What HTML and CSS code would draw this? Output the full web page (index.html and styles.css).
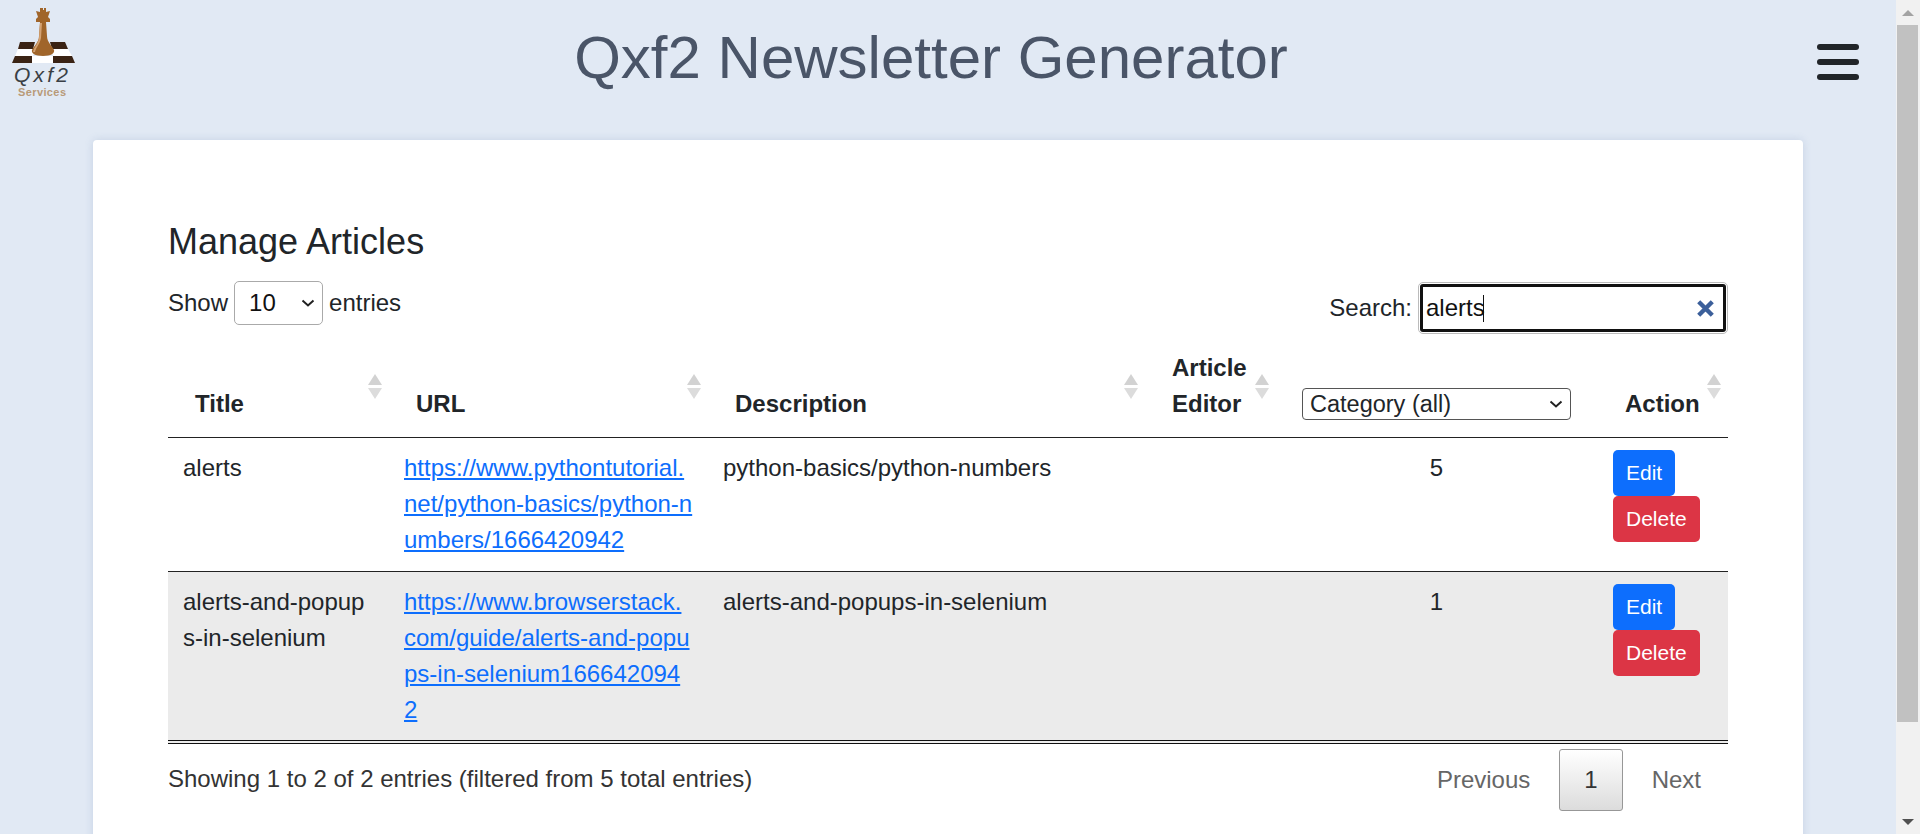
FILE: index.html
```html
<!DOCTYPE html>
<html lang="en">
<head>
    <meta charset="UTF-8">
    <title>Qxf2 Newsletter Generator</title>
    <link rel="stylesheet" href="styles.css">
</head>
<body>
    <div class="page">
        <header class="topbar">
            <svg class="logo" viewBox="0 0 64 88" width="64" height="88" aria-label="Qxf2 Services">
                <polygon points="8,34 23,34 21,41 6,41" fill="#3a2314"/>
                <polygon points="38,34 53,34 56,41 40,41" fill="#3a2314"/>
                <polygon points="6,41 22,41 21,48 3,48" fill="#fff"/>
                <polygon points="40,41 56,41 60,48 41,48" fill="#fff"/>
                <polygon points="3,48 20,48 20,55 0,55" fill="#3a2314"/>
                <polygon points="20,48 41,48 41,55 20,55" fill="#fff"/>
                <polygon points="41,48 60,48 63,55 41,55" fill="#3a2314"/>
                <path d="M28 0h3v2h1v-2h2v4l4-1-2 6 2 2v3h-4l1 14c0 6 5 10 7 14 1 3-3 6-11 6s-12-3-11-6c2-4 7-8 7-14l1-14h-4v-3l2-2-2-6 4 1z" fill="#a0652a"/>
                <path d="M28 15h2l-1 15c-1 6-5 9-6 14h-2c1-5 5-8 6-14z" fill="#d4a272"/>
                <text class="logo-name" x="2" y="74" textLength="54">Qxf2</text>
                <text class="logo-sub" x="6" y="88" textLength="48">Services</text>
            </svg>
            <h1 class="page-title">Qxf2 Newsletter Generator</h1>
            <button class="hamburger" aria-label="Menu"><span></span><span></span><span></span></button>
        </header>

        <main class="card">
            <h3 class="card-title">Manage Articles</h3>

            <div class="table-controls">
                <label class="length">
                    Show
                    <select class="length-select"><option>10</option><option>25</option><option>50</option></select>
                    entries
                </label>
                <label class="search">
                    Search:
                    <span class="search-box">
                        <input class="search-input" type="search" value="alerts">
                        <span class="search-caret"></span>
                        <svg class="search-clear" viewBox="0 0 14 14" width="19" height="19"><path d="M2 2l10 10M12 2L2 12" stroke="#3b5f9a" stroke-width="3.2"/></svg>
                    </span>
                </label>
            </div>

            <table class="articles">
                <thead>
                    <tr>
                        <th class="col-title sortable">Title</th>
                        <th class="col-url sortable">URL</th>
                        <th class="col-desc sortable">Description</th>
                        <th class="col-editor sortable">Article Editor</th>
                        <th class="col-category">
                            <select class="category-select"><option>Category (all)</option><option>1</option><option>5</option></select>
                        </th>
                        <th class="col-action sortable">Action</th>
                    </tr>
                </thead>
                <tbody>
                    <tr>
                        <td>alerts</td>
                        <td><a href="#">https://www.pythontutorial.net/python-basics/python-numbers/1666420942</a></td>
                        <td>python-basics/python-numbers</td>
                        <td></td>
                        <td class="cell-category">5</td>
                        <td>
                            <a class="btn btn-edit" href="#">Edit</a>
                            <a class="btn btn-delete" href="#">Delete</a>
                        </td>
                    </tr>
                    <tr class="row-even">
                        <td>alerts-and-popups-in-selenium</td>
                        <td><a href="#">https://www.browserstack.com/guide/alerts-and-popups-in-selenium1666420942</a></td>
                        <td>alerts-and-popups-in-selenium</td>
                        <td></td>
                        <td class="cell-category">1</td>
                        <td>
                            <a class="btn btn-edit" href="#">Edit</a>
                            <a class="btn btn-delete" href="#">Delete</a>
                        </td>
                    </tr>
                </tbody>
            </table>

            <div class="table-footer">
                <div class="info">Showing 1 to 2 of 2 entries (filtered from 5 total entries)</div>
                <div class="pager">
                    <a class="page-link" href="#">Previous</a>
                    <a class="page-link current" href="#">1</a>
                    <a class="page-link" href="#">Next</a>
                </div>
            </div>
        </main>
    </div>

    <div class="scrollbar">
        <div class="scroll-arrow up"></div>
        <div class="scroll-track"><div class="scroll-thumb"></div></div>
        <div class="scroll-arrow down"></div>
    </div>
</body>
</html>
```

FILE: styles.css
```css
* {
    box-sizing: border-box;
}

html, body {
    height: 100%;
}

body {
    margin: 0;
    display: flex;
    overflow: hidden;
    background-color: #e1e9f4;
    color: #212529;
    font-family: "Liberation Sans", Arial, sans-serif;
    font-size: 24px;
    line-height: 36px;
}

.page {
    flex: 1;
    min-width: 0;
    height: 100%;
    overflow: hidden;
}

/* header */
.topbar {
    display: flex;
    align-items: flex-start;
    height: 140px;
    padding-left: 12px;
}

.logo {
    flex: none;
    margin-top: 8px;
    overflow: visible;
}

.logo-name {
    font-family: "Liberation Sans", sans-serif;
    font-style: italic;
    font-size: 21px;
    fill: #3a3f45;
}

.logo-sub {
    font-family: "Liberation Sans", sans-serif;
    font-size: 11px;
    font-weight: bold;
    fill: #b89a78;
}

.page-title {
    flex: 1;
    margin: 22px 31px 0 0;
    font-size: 60px;
    font-weight: 400;
    line-height: 72px;
    text-align: center;
    color: #4a5568;
}

.hamburger {
    flex: none;
    display: flex;
    flex-direction: column;
    gap: 9px;
    width: 42px;
    margin: 44px 37px 0 0;
    padding: 0;
    border: none;
    background: none;
}

.hamburger span {
    height: 6px;
    border-radius: 3px;
    background-color: #212529;
}

/* card */
.card {
    height: 800px;
    margin: 0 93px;
    padding: 82px 75px 75px;
    background-color: #fff;
    border-radius: 4px;
    box-shadow: 0 0 8px rgba(90, 120, 170, 0.2);
}

.card-title {
    margin: 0 0 19px;
    font-size: 36px;
    font-weight: 400;
    line-height: 40px;
}

.table-controls {
    display: flex;
    justify-content: space-between;
    align-items: flex-start;
    height: 54px;
}

.length {
    display: flex;
    align-items: center;
    gap: 6px;
    height: 44px;
}

.length-select,
.category-select {
    -webkit-appearance: none;
    appearance: none;
    background: #fff url("data:image/svg+xml,%3Csvg xmlns='http://www.w3.org/2000/svg' viewBox='0 0 14 8'%3E%3Cpath d='M1.5 1.5L7 6.5l5.5-5' fill='none' stroke='%23222' stroke-width='2'/%3E%3C/svg%3E") no-repeat right 7px center / 14px 8px;
}

.length-select {
    width: 89px;
    height: 44px;
    padding: 0 8px 0 14px;
    border: 1px solid #aaa;
    border-radius: 5px;
    font: inherit;
    color: #111;
}

.search {
    display: flex;
    align-items: center;
    gap: 6px;
    margin-top: 1px;
}

.search-box {
    position: relative;
    display: block;
    width: 310px;
    height: 52px;
}

.search-input {
    width: 100%;
    height: 100%;
    padding: 0 40px 0 7px;
    border: 1px solid #bbb;
    border-radius: 5px;
    outline: 3px solid #111;
    outline-offset: -5px;
    background-color: #fff;
    font: inherit;
    color: #111;
    -webkit-appearance: none;
    appearance: none;
}

.search-input::-webkit-search-cancel-button {
    display: none;
}

.search-caret {
    position: absolute;
    left: 65px;
    top: 13px;
    width: 1px;
    height: 27px;
    background-color: #111;
}

.search-clear {
    position: absolute;
    right: 13px;
    top: 17px;
}

/* table */
.articles {
    width: 100%;
    table-layout: fixed;
    border-collapse: separate;
    border-spacing: 0;
}

.articles th {
    position: relative;
    padding: 15px 27px;
    border-bottom: 1px solid #222;
    text-align: left;
    vertical-align: bottom;
    font-weight: bold;
}

.articles td {
    padding: 12px 15px;
    border-bottom: 1px solid #222;
    vertical-align: top;
    word-break: break-all;
}

.articles tbody tr:first-child td {
    padding-bottom: 13px;
}

.articles tbody tr:last-child td {
    border-bottom: 4px double #111;
}

.row-even td {
    background-color: #ebebeb;
}

.col-title { width: 221px; }
.col-url { width: 319px; }
.col-desc { width: 437px; }
.col-editor { width: 142px; }
.col-category { width: 311px; }
.col-action { width: 130px; }

.articles th.col-category {
    padding-left: 15px;
    padding-right: 27px;
}

.cell-category {
    text-align: center;
    padding-right: 27px !important;
}

/* sort arrows sit over the header cell */
.sortable::before,
.sortable::after {
    content: "";
    position: absolute;
    right: 7px;
    width: 0;
    height: 0;
    border-left: 7px solid transparent;
    border-right: 7px solid transparent;
}

.col-editor.sortable::before,
.col-editor.sortable::after {
    right: 18px;
}

.sortable::before {
    top: 39px;
    border-bottom: 11px solid #d2d2d2;
}

.sortable::after {
    top: 53px;
    border-top: 11px solid #dcdcdc;
}

a {
    color: #0d6efd;
}

.category-select {
    display: block;
    width: 100%;
    height: 32px;
    margin-top: -2px;
    margin-bottom: 2px;
    padding: 0 24px 0 7px;
    border: 1px solid #555;
    border-radius: 4px;
    font: inherit;
    font-weight: 400;
    font-size: 23.5px;
    line-height: 30px;
    color: #212529;
}

.btn {
    display: table;
    padding: 6px 13px;
    border-radius: 5px;
    font-size: 21px;
    line-height: 34px;
    color: #fff;
    text-decoration: none;
}

.btn-edit {
    background-color: #0d6efd;
}

.btn-delete {
    background-color: #dc3545;
}

/* footer */
.table-footer {
    display: flex;
    justify-content: space-between;
    align-items: flex-start;
    padding-top: 5px;
}

.info {
    margin-top: 12px;
    color: #333;
}

.pager {
    display: flex;
}

.page-link {
    padding: 12px 26px;
    border: 1px solid transparent;
    border-radius: 3px;
    color: #666;
    text-decoration: none;
}

.page-link.current {
    padding: 12px 24px;
    margin: 0 2px;
    border-color: #979797;
    color: #333;
    background: linear-gradient(to bottom, #fff 0%, #dcdcdc 100%);
}

/* drawn scrollbar */
.scrollbar {
    flex: none;
    display: flex;
    flex-direction: column;
    width: 24px;
    height: 100%;
    background-color: #f1f1f1;
}

.scroll-arrow {
    flex: none;
    height: 25px;
    display: flex;
    justify-content: center;
    align-items: center;
}

.scroll-arrow::before {
    content: "";
    border-left: 6px solid transparent;
    border-right: 6px solid transparent;
}

.scroll-arrow.up::before {
    border-bottom: 6px solid #a3a3a3;
}

.scroll-arrow.down::before {
    border-top: 6px solid #505050;
}

.scroll-track {
    flex: 1;
    padding: 0 2px 0 1px;
}

.scroll-thumb {
    height: 697px;
    background-color: #c1c1c1;
}
```
